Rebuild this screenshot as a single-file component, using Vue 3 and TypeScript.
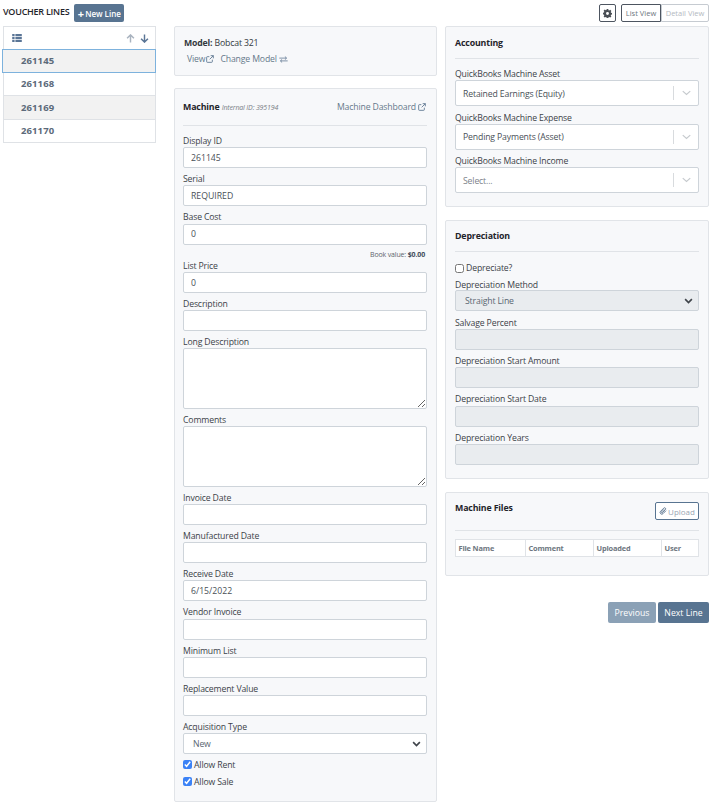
<script setup lang="ts">
const lines = [
  { id: '261145', shaded: true, active: true },
  { id: '261168', shaded: false, active: false },
  { id: '261169', shaded: true, active: false },
  { id: '261170', shaded: false, active: false },
]
</script>

<template>
  <div class="page">
    <header class="top">
      <div class="top-left">
        <span class="title">VOUCHER LINES</span>
        <button class="btn-new"><span class="plus">+</span>New Line</button>
      </div>
      <div class="top-right">
        <button class="btn-gear" aria-label="Settings">
          <svg viewBox="0 0 16 16" width="9" height="9"><path fill="#4a4f55" d="M6.6 0h2.8l.4 2.1 1.3.6 1.8-1.2 2 2-1.2 1.8.6 1.3 2.100.4v2.800l-2.100.4-.6 1.300 1.200 1.800-2 2-1.800-1.200-1.300.6-.4 2.100H6.600l-.4-2.100-1.300-.6-1.800 1.200-2-2 1.200-1.800-.6-1.300L-.4 9.400V6.600l2.100-.4.6-1.300-1.200-1.800 2-2 1.800 1.200 1.300-.6zM8 5.400a2.600 2.600 0 1 0 0 5.200 2.600 2.600 0 0 0 0-5.200z"/></svg>
        </button>
        <div class="view-group">
          <button class="view on">List View</button>
          <button class="view">Detail View</button>
        </div>
      </div>
    </header>

    <div class="columns">
      <aside class="list">
        <div class="list-head">
          <svg viewBox="0 0 12 10" width="10" height="8"><path fill="#5a7596" d="M0 0h3v2.800H0zM4 0h8v2.800H4zM0 3.600h3v2.800H0zM4 3.600h8v2.800H4zM0 7.200h3V10H0zM4 7.200h8V10H4z"/></svg>
          <div class="arrows">
            <svg viewBox="0 0 10 10" width="9" height="9"><path d="M5 9.500V1M1.200 4.800 5 1l3.800 3.800" fill="none" stroke="#a9b3bf" stroke-width="1.600"/></svg>
            <svg viewBox="0 0 10 10" width="9" height="9"><path d="M5 .5V9M1.200 5.200 5 9l3.800-3.800" fill="none" stroke="#5a7596" stroke-width="1.600"/></svg>
          </div>
        </div>
        <div
          v-for="l in lines"
          :key="l.id"
          class="row"
          :class="{ shaded: l.shaded, active: l.active }"
        >{{ l.id }}</div>
      </aside>

      <main class="mid">
        <section class="card model">
          <div><b>Model:</b> Bobcat 321</div>
          <div class="model-links">
            <a>View
              <svg class="ext" viewBox="0 0 12 12"><path d="M9.500 7v3a1 1 0 0 1-1 1H2a1 1 0 0 1-1-1V3.500a1 1 0 0 1 1-1h3M7 1h4v4M11 1 5.500 6.500" fill="none" stroke="#5c7590" stroke-width="1.300"/></svg>
            </a>
            <a>Change Model
              <svg class="swap" viewBox="0 0 12 10"><path d="M0 3h10M8 .8 10.500 3 8 5.200M12 7H2M4 4.800 1.500 7 4 9.200" fill="none" stroke="#5c7590" stroke-width="1.100"/></svg>
            </a>
          </div>
        </section>

        <section class="card machine">
          <div class="card-head machine-head">
            <div><b class="h">Machine</b> <i class="internal">Internal ID: 395194</i></div>
            <a class="dash">Machine Dashboard
              <svg class="ext" viewBox="0 0 12 12"><path d="M9.500 7v3a1 1 0 0 1-1 1H2a1 1 0 0 1-1-1V3.500a1 1 0 0 1 1-1h3M7 1h4v4M11 1 5.500 6.500" fill="none" stroke="#5c7590" stroke-width="1.300"/></svg>
            </a>
          </div>
          <label class="lab">Display ID</label>
          <input class="inp" value="261145" />
          <label class="lab">Serial</label>
          <input class="inp" value="REQUIRED" />
          <label class="lab">Base Cost</label>
          <input class="inp" value="0" />
          <div class="book">Book value: <b>$0.00</b></div>
          <label class="lab tight">List Price</label>
          <input class="inp" value="0" />
          <label class="lab">Description</label>
          <input class="inp" />
          <label class="lab">Long Description</label>
          <textarea class="area"></textarea>
          <label class="lab">Comments</label>
          <textarea class="area"></textarea>
          <label class="lab">Invoice Date</label>
          <input class="inp" />
          <label class="lab">Manufactured Date</label>
          <input class="inp" />
          <label class="lab">Receive Date</label>
          <input class="inp" value="6/15/2022" />
          <label class="lab">Vendor Invoice</label>
          <input class="inp" />
          <label class="lab">Minimum List</label>
          <input class="inp" />
          <label class="lab">Replacement Value</label>
          <input class="inp" />
          <label class="lab">Acquisition Type</label>
          <div class="sel">
            <span class="sel-text">New</span>
            <svg class="chev" viewBox="0 0 12 8"><path d="M1.500 1.500 6 6l4.500-4.500" fill="none" stroke="#3f444a" stroke-width="2.200"/></svg>
          </div>
          <div class="checks">
            <label class="chk"><input type="checkbox" checked /> Allow Rent</label>
            <label class="chk"><input type="checkbox" checked /> Allow Sale</label>
          </div>
        </section>
      </main>

      <div class="right">
        <section class="card accounting">
          <div class="card-head"><b class="h">Accounting</b></div>
          <label class="lab first">QuickBooks Machine Asset</label>
          <div class="combo"><span class="combo-text">Retained Earnings (Equity)</span><span class="combo-ind"><svg viewBox="0 0 12 8" width="9" height="6"><path d="M1 1.500 6 6l5-4.500" fill="none" stroke="#c6cace" stroke-width="1.600"/></svg></span></div>
          <label class="lab first">QuickBooks Machine Expense</label>
          <div class="combo"><span class="combo-text">Pending Payments (Asset)</span><span class="combo-ind"><svg viewBox="0 0 12 8" width="9" height="6"><path d="M1 1.500 6 6l5-4.500" fill="none" stroke="#c6cace" stroke-width="1.600"/></svg></span></div>
          <label class="lab first">QuickBooks Machine Income</label>
          <div class="combo"><span class="combo-text ph">Select...</span><span class="combo-ind"><svg viewBox="0 0 12 8" width="9" height="6"><path d="M1 1.500 6 6l5-4.500" fill="none" stroke="#c6cace" stroke-width="1.600"/></svg></span></div>
        </section>

        <section class="card depreciation">
          <div class="card-head"><b class="h">Depreciation</b></div>
          <label class="chk dep"><input type="checkbox" /> Depreciate?</label>
          <label class="lab method">Depreciation Method</label>
          <div class="sel disabled">
            <span class="sel-text">Straight Line</span>
            <svg class="chev" viewBox="0 0 12 8"><path d="M1.500 1.500 6 6l4.500-4.500" fill="none" stroke="#3f444a" stroke-width="2.200"/></svg>
          </div>
          <label class="lab">Salvage Percent</label>
          <input class="inp disabled" disabled />
          <label class="lab">Depreciation Start Amount</label>
          <input class="inp disabled" disabled />
          <label class="lab">Depreciation Start Date</label>
          <input class="inp disabled" disabled />
          <label class="lab">Depreciation Years</label>
          <input class="inp disabled" disabled />
        </section>

        <section class="card files">
          <div class="card-head files-head">
            <b class="h">Machine Files</b>
            <button class="btn-upload">
              <svg viewBox="0 0 12 12" width="8" height="8"><path d="M10.500 5.500 6 10a2.500 2.500 0 0 1-3.600-3.600l4.800-4.800a1.700 1.700 0 0 1 2.400 2.400L5 8.600a.8.800 0 0 1-1.200-1.200l4-4" fill="none" stroke="#5c7590" stroke-width="1.400"/></svg>
              Upload
            </button>
          </div>
          <table class="tbl">
            <thead><tr><th class="c1">File Name</th><th class="c2">Comment</th><th class="c3">Uploaded</th><th>User</th></tr></thead>
          </table>
        </section>

        <div class="nav">
          <button class="btn-prev">Previous</button>
          <button class="btn-next">Next Line</button>
        </div>
      </div>
    </div>
  </div>
</template>

<style>
html, body { margin: 0; background: #fff; }
</style>

<style scoped>
* { box-sizing: border-box; }
.page {
  width: 712px;
  height: 804px;
  overflow: hidden;
  padding: 4px 3px 0;
  font-family: "Open Sans", "Noto Sans", sans-serif;
  font-size: 8.700px;
  color: #33383e;
  letter-spacing: -0.150px;
}
b { font-weight: 700; }
.top { display: flex; justify-content: space-between; height: 22px; align-items: flex-start; }
.top-left { display: flex; align-items: center; gap: 5px; }
.title { font-weight: 600; color: #1f242a; font-size: 9px; letter-spacing: -0.250px; margin-bottom: 3px; }
.btn-new {
  background: #587491; color: #fff; border: 0; border-radius: 2px;
  width: 50px; height: 18px; padding: 0; font: inherit; font-size: 8px; font-weight: 600;
  display: flex; align-items: center; justify-content: center; gap: 1px;
}
.plus { font-size: 11px; line-height: 1; font-weight: 700; }
.top-right { display: flex; gap: 5px; }
.btn-gear {
  width: 17px; height: 18px; background: #fff; border: 1px solid #4d5560; border-radius: 2px;
  display: flex; align-items: center; justify-content: center; padding: 0;
}
.view-group { display: flex; }
.view {
  height: 18px; width: 48px; padding: 0; background: #fff; border: 1px solid #c6cbd1;
  font: inherit; font-size: 7.500px; color: #b4b9bf; border-radius: 0 2px 2px 0;
}
.view.on { width: 40px; border-color: #4d5560; color: #6e7680; border-radius: 2px 0 0 2px; }

.columns { display: grid; grid-template-columns: 153px 289px 264px; }
.mid { margin-left: 18px; width: 263px; }

.list-head {
  height: 23px; border: 1px solid #dfe2e6; border-bottom: 0;
  display: flex; align-items: center; justify-content: space-between; padding: 0 6px 0 8px;
}
.arrows { display: flex; gap: 5px; }
.row {
  height: 23.500px; border: 1px solid #dfe2e6; border-top-width: 0;
  padding-left: 17px; display: flex; align-items: center;
  font-weight: 700; color: #5c6a7a; font-size: 9.500px; letter-spacing: 0.100px;
}
.row.shaded { background: #f2f2f2; }
.row.active { border: 1px solid #7db2dd; margin-left: -1px; padding-left: 18px; }

.card { background: #f7f8fa; border: 1px solid #e1e4e8; border-radius: 2px; padding: 9px; }
.model { height: 50px; padding-top: 10px; line-height: 12px; }
.model-links { display: flex; gap: 6px; margin-top: 4px; padding-left: 3px; }
.model-links a { color: #66788b; display: flex; align-items: center; gap: 1px; }
.ext { width: 8px; height: 8px; }
.swap { width: 9px; height: 7px; margin-left: 1px; }
.machine { margin-top: 12px; height: 714px; padding: 11px 9px 9px 8px; }
.card-head { border-bottom: 1px solid #e0e3e7; }
.machine-head { height: 26px; display: flex; justify-content: space-between; margin-bottom: 4px; }
.machine-head > div, .dash { line-height: 14px; }
.h { color: #1f242a; font-size: 8.800px; font-weight: 700; }
.internal { font-size: 7px; color: #7a8087; }
.dash { color: #66788b; display: flex; gap: 2px; align-items: center; height: 14px; padding-right: 1px; }

.lab { display: block; height: 17.200px; line-height: 11px; padding-top: 6px; color: #3c4248; }
.lab.first { height: 13px; padding-top: 2px; }
.lab.tight { height: 11.500px; padding-top: 0; line-height: 10px; }
.lab.method { height: 15px; padding-top: 4px; line-height: 12px; }
.inp, .area, .sel {
  display: block; width: 100%; background: #fff; border: 1px solid #ced4da; border-radius: 2px;
  font: inherit; color: #495057; outline: 0;
}
.inp { height: 21px; padding: 0 7px; }
.area { height: 60.600px; resize: vertical; padding: 3px 7px; }
.book { text-align: right; font-size: 7px; height: 16px; line-height: 11px; color: #5d646c; padding: 4px 2px 0 0; }
.book b { color: #3f4b59; }
.sel { height: 21px; display: flex; align-items: center; justify-content: space-between; padding: 0 5px 0 9px; color: #5a6672; }
.chev { width: 9px; height: 6px; }
.sel.disabled, .inp.disabled { background: #e9ecef; }
.sel.disabled { margin-bottom: 1px; }
.checks { margin-top: 2px; }
.chk { display: flex; align-items: center; height: 17px; gap: 2px; color: #3c4248; }
.chk input { width: 9px; height: 9px; margin: 0; accent-color: #3b82f6; }

.accounting { height: 181px; padding-top: 10px; }
.accounting .card-head { height: 22px; margin-bottom: 8px; }
.combo {
  height: 26px; background: #fff; border: 1px solid #ced4da; border-radius: 2px;
  display: flex; align-items: center; justify-content: space-between; padding-left: 7px; color: #495057; margin-bottom: 4.500px;
}
.combo-text { padding-top: 1px; }
.ph { color: #7c828a; }
.combo-ind { display: flex; align-items: center; justify-content: center; width: 25px; height: 14px; border-left: 1px solid #d8dbde; }
.depreciation { margin-top: 13px; height: 259px; padding-top: 9px; }
.depreciation .card-head { height: 22px; margin-bottom: 5px; }
.depreciation .chk { height: 14px; margin-top: 9px; }
.files { margin-top: 13px; height: 84px; padding-top: 9px; }
.files-head { display: flex; justify-content: space-between; height: 29px; margin-bottom: 8px; }
.btn-upload {
  height: 18px; width: 44px; background: #fff; border: 1px solid #587491; border-radius: 2px;
  font: inherit; font-size: 8px; color: #9aa6b4; padding: 0; display: flex; align-items: center; justify-content: center; gap: 1px;
}
.tbl { width: 100%; border-collapse: collapse; table-layout: fixed; background: #fff; }
.tbl th {
  border: 1px solid #e0e3e7; height: 17px; padding: 0 2.500px 1px; text-align: left;
  font-size: 7.400px; color: #6e7680; font-weight: 700;
}
.c1 { width: 70px; }
.c2 { width: 68px; }
.c3 { width: 68px; }
.nav { display: flex; justify-content: flex-end; gap: 2px; margin-top: 26px; }
.nav button { height: 21px; border: 0; border-radius: 2px; color: #fff; font: inherit; padding: 0; }
.btn-prev { width: 48px; background: #8ba1b6; }
.btn-next { width: 51px; background: #587491; }
</style>
